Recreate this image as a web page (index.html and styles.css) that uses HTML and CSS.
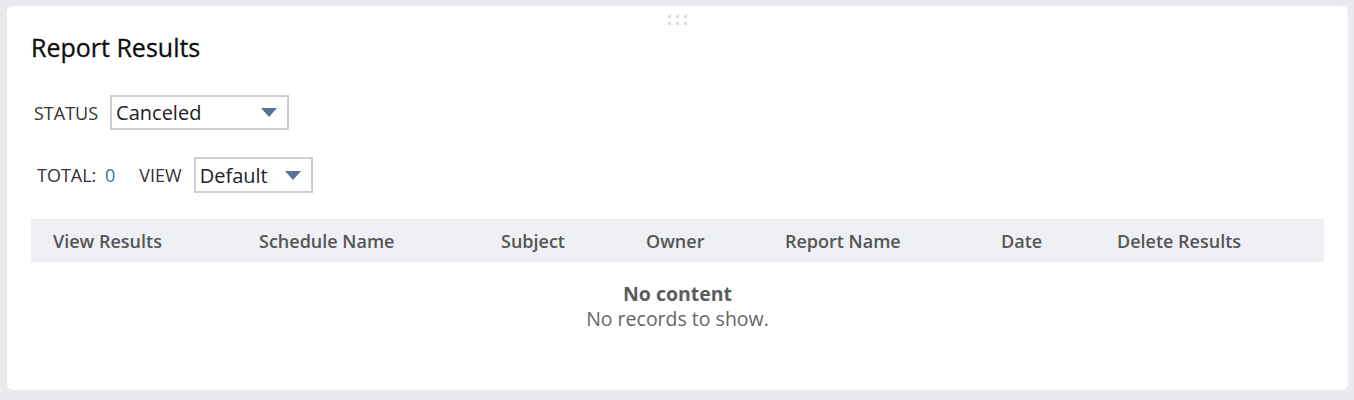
FILE: index.html
```html
<!DOCTYPE html>
<html lang="en">
<head>
    <meta charset="UTF-8">
    <meta name="viewport" content="width=device-width, initial-scale=1.0">
    <title>Report Results</title>
    <link rel="stylesheet" href="styles.css">
</head>
<body>

    <div class="card">
        <!-- drag handle -->
        <div class="handle">
            <span></span><span></span><span></span>
            <span></span><span></span><span></span>
        </div>

        <h1 class="title">Report Results</h1>

        <div class="filter-row status-row">
            <label class="label">STATUS</label>
            <div class="select status-select">
                <span>Canceled</span>
                <svg class="caret" width="16" height="10" viewBox="0 0 16 10"><path d="M0 0 L16 0 L8 9 Z" fill="#5b7294"/></svg>
            </div>
        </div>

        <div class="filter-row view-row">
            <span class="label total">TOTAL: <span class="count">0</span></span>
            <label class="label">VIEW</label>
            <div class="select view-select">
                <span>Default</span>
                <svg class="caret" width="16" height="10" viewBox="0 0 16 10"><path d="M0 0 L16 0 L8 9 Z" fill="#5b7294"/></svg>
            </div>
        </div>

        <div class="results">
            <div class="thead">
                <div>View Results</div>
                <div>Schedule Name</div>
                <div>Subject</div>
                <div>Owner</div>
                <div>Report Name</div>
                <div>Date</div>
                <div>Delete Results</div>
            </div>
            <div class="empty">
                <strong>No content</strong>
                <p>No records to show.</p>
            </div>
        </div>
    </div>

</body>
</html>
```

FILE: styles.css
```css
body { margin: 0; padding: 6px 6px 10px 7px; background: #e9eaee; font-family: "Open Sans", Arial, sans-serif; }
.card { position: relative; background: #fff; border-radius: 6px; height: 384px; box-sizing: border-box; padding: 26px 24px 0 24px; }
.handle { position: absolute; top: 9px; left: 661px; display: grid; grid-template-columns: repeat(3, 3px); gap: 4px 5px; }
.handle span { width: 3px; height: 3px; background: #d4d4d4; border-radius: 50%; }
.title { margin: 0; font-size: 25px; font-weight: 500; color: #0d0d0d; line-height: 30px; -webkit-text-stroke: 0.3px #0d0d0d; }
.filter-row { display: flex; align-items: center; }
.status-row { margin-top: 33px; padding-left: 3px; }
.view-row { margin-top: 27px; padding-left: 6px; }
.label { font-size: 18px; color: #333; margin-right: 12px; }
.total { margin-right: 24px; }
.count { color: #3c6ea6; margin-left: 4px; }
.select { display: flex; align-items: center; justify-content: space-between; border: 2px solid #cfcfcf; box-sizing: border-box; font-size: 20px; color: #222; padding: 0 10px 0 4px; }
.status-select { width: 179px; height: 35px; }
.view-select { width: 119px; height: 36px; }
.caret { margin-top: 1px; }
.results { margin-top: 26px; }
.thead { display: grid; grid-template-columns: 206px 242px 145px 139px 216px 116px 228px; background: #eff0f3; height: 43px; align-items: center; font-size: 18px; font-weight: 600; color: #555; }
.thead div { padding-left: 22px; }
.empty { text-align: center; color: #666; padding-top: 19px; font-size: 19.5px; }
.empty strong { display: block; font-weight: 700; color: #5c5c5c; line-height: 25px; }
.empty p { margin: 0; line-height: 25px; }
```
